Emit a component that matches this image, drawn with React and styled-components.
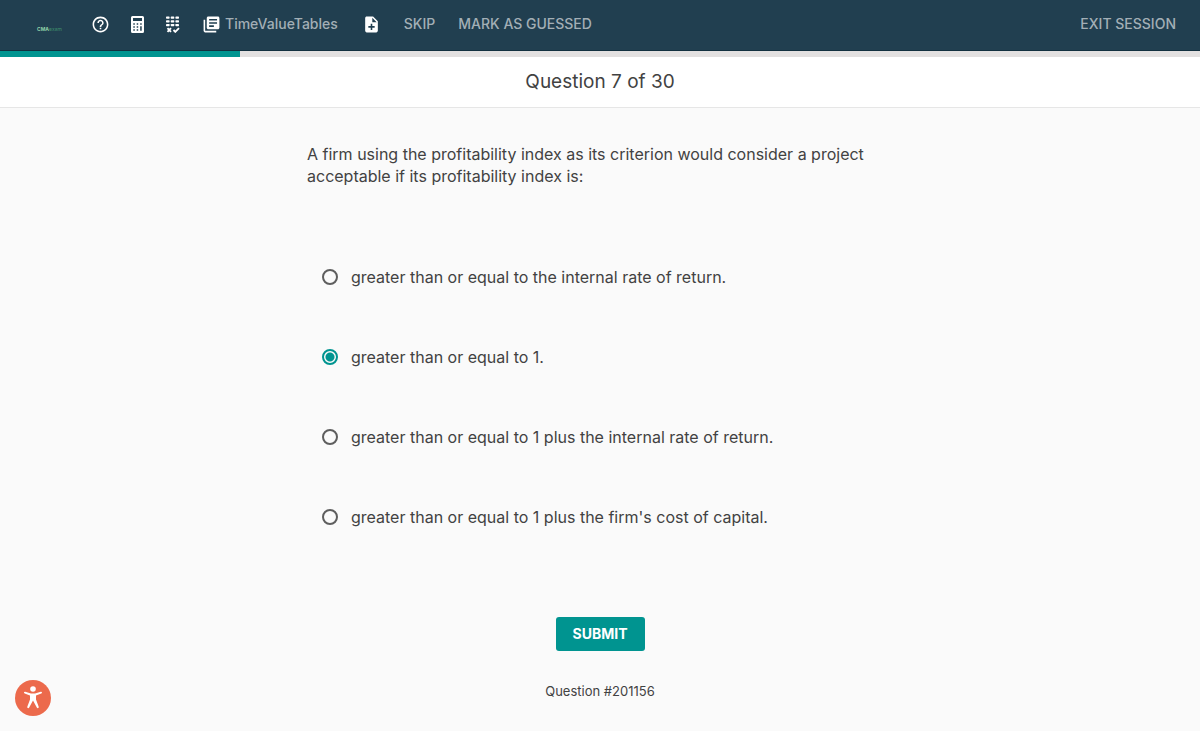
import React, { useState } from "react";
import styled, { createGlobalStyle } from "styled-components";
import { MdHelpOutline, MdLibraryBooks, MdNoteAdd } from "react-icons/md";

const GlobalStyle = createGlobalStyle`
  * { box-sizing: border-box; }
  body {
    margin: 0;
    background: #fafafa;
    color: #424242;
    font-family: Inter, "Open Sans", sans-serif;
  }
`;

const Page = styled.div`
  min-height: 100vh;
  display: flex;
  flex-direction: column;
`;

const TopBar = styled.header`
  display: flex;
  align-items: center;
  height: 51px;
  padding: 0 24px 2px 37px;
  background: #213f50;
  border-bottom: 1px solid #12303f;
`;

const Logo = styled.a`
  width: 27px;
  margin-right: 27px;
  padding-top: 10px;
  color: #3f8f6c;
  font-size: 5px;
  line-height: 8px;
  text-decoration: none;
  white-space: nowrap;
  b { color: #8fd0a8; }
`;

const Tools = styled.nav`
  display: flex;
  align-items: center;
  flex: 1;
`;

const BarButton = styled.button`
  display: flex;
  align-items: center;
  gap: 4px;
  margin: 0 ${(p) => p.$after || 0}px 0 0;
  padding: 0;
  border: 0;
  background: none;
  color: ${(p) => (p.$icon ? "#fff" : "#a3afb6")};
  font-family: inherit;
  font-size: 14px;
  font-weight: 500;
  line-height: 20px;
  white-space: nowrap;
  cursor: pointer;
  svg { color: #fff; display: block; }
`;

const Progress = styled.div`
  height: 6px;
  background: #e2e0e0;
`;

const ProgressFill = styled.div`
  height: 100%;
  background: #009490;
`;

const TitleBar = styled.div`
  padding: 12px 16px 13px;
  background: #fff;
  border-bottom: 1px solid #e6e6e6;
  text-align: center;
`;

const Title = styled.h1`
  margin: 0;
  font-size: 19px;
  font-weight: 400;
  line-height: 25px;
`;

const Main = styled.form`
  display: flex;
  flex-direction: column;
  align-items: center;
  padding: 35px 16px 24px;
`;

const Question = styled.fieldset`
  width: 100%;
  max-width: 586px;
  margin: 0;
  padding: 0;
  border: 0;
`;

const Prompt = styled.legend`
  padding: 0;
  font-size: 16px;
  line-height: 22px;
`;

const Options = styled.div`
  display: grid;
  gap: 56px;
  padding: 78px 0 0 15px;
`;

const Option = styled.label`
  display: flex;
  align-items: center;
  gap: 13px;
  font-size: 16px;
  line-height: 24px;
  cursor: pointer;
`;

const Radio = styled.input`
  appearance: none;
  width: 16px;
  height: 16px;
  margin: 0;
  border: 2px solid #5e5e5e;
  border-radius: 50%;
  background: transparent;
  &:checked {
    border-color: #009490;
    background: radial-gradient(circle, #009490 4px, #fafafa 5px);
  }
`;

const Submit = styled.button`
  margin-top: 88px;
  padding: 7px 17px;
  border: 0;
  border-radius: 3px;
  background: #009490;
  color: #fff;
  font-family: inherit;
  font-size: 14px;
  font-weight: 700;
  line-height: 20px;
  cursor: pointer;
`;

const QuestionId = styled.p`
  margin: 30px 0 0;
  font-size: 13px;
  line-height: 20px;
`;

const AccessButton = styled.button`
  position: fixed;
  left: 15px;
  bottom: 15px;
  width: 36px;
  height: 36px;
  padding: 0;
  border: 0;
  border-radius: 50%;
  background: #ec6a4c;
  cursor: pointer;
  svg { display: block; margin: auto; }
`;

const CalculatorIcon = () => (
  <svg width="13" height="17" viewBox="0 0 13 17" fill="currentColor" aria-hidden="true">
    <path fillRule="evenodd" d="M1.500 0h10A1.500 1.500 0 0 1 13 1.500V15.500A1.500 1.500 0 0 1 11.500 17H1.500A1.500 1.500 0 0 1 0 15.500V1.500A1.500 1.500 0 0 1 1.500 0ZM2 2v3h9V2ZM2.300 7.300v1.400h1.500V7.300ZM5.700 7.300v1.400h1.500V7.300ZM9.200 7.300v1.400h1.500V7.300ZM2.300 10.300v1.400h1.500v-1.400ZM5.700 10.300v1.400h1.500v-1.400ZM9.200 10.300v4.400h1.500v-4.400ZM2.300 13.300v1.400h1.500v-1.400ZM5.700 13.300v1.400h1.500v-1.400Z" />
  </svg>
);

const KeypadIcon = () => (
  <svg width="15" height="17" viewBox="0 0 15 17" fill="currentColor" aria-hidden="true">
    {[0.5, 4.2, 7.9].map((y) =>
      [1, 5.7, 10.4].map((x) => <rect key={`${x}-${y}`} x={x} y={y} width="3.600" height="2.300" rx=".7" />)
    )}
    <path d="m2.500 12.200 3.500 3.600M6 12.200l-3.500 3.600M8.500 14l1.800 1.800 3.700-3.700" fill="none" stroke="currentColor" strokeWidth="1.900" />
  </svg>
);

const PersonIcon = () => (
  <svg width="24" height="28" viewBox="0 0 24 28" fill="#fff" aria-hidden="true">
    <circle cx="12" cy="5" r="2.800" />
    <path d="M4.200 7.800 10 9.500h4l5.800-1.700c1.300-.3 1.700 1.300.5 1.700L15 11.400v4.200l2.700 7.200c.4 1.300-1.300 1.900-1.900.7L12 16.600l-3.800 6.900c-.6 1.200-2.300.6-1.900-.7L9 15.600v-4.200L3.700 9.500c-1.200-.4-.8-2 .5-1.700Z" />
  </svg>
);

const OPTIONS = [
  "greater than or equal to the internal rate of return.",
  "greater than or equal to 1.",
  "greater than or equal to 1 plus the internal rate of return.",
  "greater than or equal to 1 plus the firm's cost of capital.",
];

export default function App() {
  const [selected, setSelected] = useState(1);
  const current = 7;
  const total = 30;
  const answered = 6;

  return (
    <Page>
      <GlobalStyle />
      <TopBar>
        <Logo href="#"><b>CMA</b>exam</Logo>
        <Tools>
          <BarButton $icon $after={21} aria-label="Help"><MdHelpOutline size={19} /></BarButton>
          <BarButton $icon $after={21} aria-label="Calculator"><CalculatorIcon /></BarButton>
          <BarButton $icon $after={22} aria-label="Answer grid"><KeypadIcon /></BarButton>
          <BarButton $after={24}><MdLibraryBooks size={19} />TimeValueTables</BarButton>
          <BarButton $icon $after={23} aria-label="Add note"><MdNoteAdd size={19} /></BarButton>
          <BarButton $after={23}>SKIP</BarButton>
          <BarButton>MARK AS GUESSED</BarButton>
        </Tools>
        <BarButton>EXIT SESSION</BarButton>
      </TopBar>
      <Progress role="progressbar" aria-label="Session progress" aria-valuenow={answered} aria-valuemax={total}>
        <ProgressFill style={{ width: `${(answered / total) * 100}%` }} />
      </Progress>
      <TitleBar><Title>Question {current} of {total}</Title></TitleBar>
      <Main onSubmit={(e) => e.preventDefault()}>
        <Question>
          <Prompt>
            A firm using the profitability index as its criterion would consider a project
            acceptable if its profitability index is:
          </Prompt>
          <Options>
            {OPTIONS.map((text, i) => (
              <Option key={text}>
                <Radio type="radio" name="answer" checked={selected === i} onChange={() => setSelected(i)} />
                {text}
              </Option>
            ))}
          </Options>
        </Question>
        <Submit type="submit">SUBMIT</Submit>
        <QuestionId>Question #201156</QuestionId>
      </Main>
      <AccessButton aria-label="Accessibility options"><PersonIcon /></AccessButton>
    </Page>
  );
}
